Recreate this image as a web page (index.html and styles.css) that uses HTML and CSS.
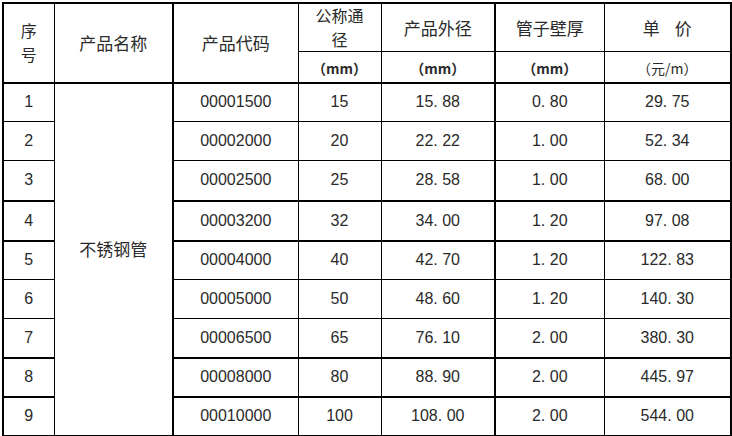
FILE: index.html
```html
<!DOCTYPE html>
<html lang="zh">
<head>
<meta charset="utf-8">
<link rel="stylesheet" href="styles.css">
</head>
<body>
<table class="price">
  <colgroup>
    <col class="c-no"><col class="c-name"><col class="c-code"><col class="c-dn"><col class="c-od"><col class="c-wall"><col class="c-price">
  </colgroup>
  <thead>
    <tr class="h1">
      <th rowspan="2" class="tight">序<br>号</th>
      <th rowspan="2" class="thickr">产品名称</th>
      <th rowspan="2">产品代码</th>
      <th class="tight">公称通<br>径</th>
      <th class="thickr">产品外径</th>
      <th>管子壁厚</th>
      <th>单&nbsp;&nbsp;&nbsp;&nbsp;价</th>
    </tr>
    <tr class="h2">
      <th class="unit">（mm）</th>
      <th class="unit thickr">（mm）</th>
      <th class="unit">（mm）</th>
      <th class="unit2">（元/m）</th>
    </tr>
  </thead>
  <tbody>
    <tr class="r39"><td>1</td><td rowspan="9" class="name thickr">不锈钢管</td><td>00001500</td><td>15</td><td class="thickr">15. 88</td><td>0. 80</td><td>29. 75</td></tr>
    <tr class="r39"><td>2</td><td>00002000</td><td>20</td><td class="thickr">22. 22</td><td>1. 00</td><td>52. 34</td></tr>
    <tr class="r40 thickb"><td>3</td><td>00002500</td><td>25</td><td class="thickr">28. 58</td><td>1. 00</td><td>68. 00</td></tr>
    <tr class="r40 thickb"><td>4</td><td>00003200</td><td>32</td><td class="thickr">34. 00</td><td>1. 20</td><td>97. 08</td></tr>
    <tr class="r39"><td>5</td><td>00004000</td><td>40</td><td class="thickr">42. 70</td><td>1. 20</td><td>122. 83</td></tr>
    <tr class="r39"><td>6</td><td>00005000</td><td>50</td><td class="thickr">48. 60</td><td>1. 20</td><td>140. 30</td></tr>
    <tr class="r39 thickb"><td>7</td><td>00006500</td><td>65</td><td class="thickr">76. 10</td><td>2. 00</td><td>380. 30</td></tr>
    <tr class="r39 thickb"><td>8</td><td>00008000</td><td>80</td><td class="thickr">88. 90</td><td>2. 00</td><td>445. 97</td></tr>
    <tr class="r39"><td>9</td><td>00010000</td><td>100</td><td class="thickr">108. 00</td><td>2. 00</td><td>544. 00</td></tr>
  </tbody>
</table>
</body>
</html>
```

FILE: styles.css
```css
html, body {
  margin: 0;
  padding: 0;
  background: #ffffff;
}

body {
  padding: 2px 1px 1px 2px;
}

.price {
  border-collapse: collapse;
  table-layout: fixed;
  width: 729px;
  border: 2px solid #000;
  font-family: "Liberation Sans", "Noto Sans CJK SC", sans-serif;
  color: #2a2a2a;
}

.c-no { width: 51px; }
.c-name { width: 119px; }
.c-code { width: 125px; }
.c-dn { width: 83px; }
.c-od { width: 114px; }
.c-wall { width: 109px; }
.c-price { width: 127px; }

.price th,
.price td {
  border: 1px solid #000;
  padding: 0;
  text-align: center;
  vertical-align: middle;
  overflow: hidden;
  white-space: nowrap;
}

.price th {
  font-weight: normal;
  font-size: 17px;
  font-family: "Noto Sans CJK SC", sans-serif;
  line-height: 22px;
}

.price th.tight {
  line-height: 23.5px;
  font-size: 16px;
}

.price td {
  font-size: 16px;
}

.h1 { height: 48px; }
.h2 { height: 31px; }
.h2 th { border-bottom: 2px solid #000; }

.price th.unit {
  font-size: 14px;
  font-weight: bold;
  line-height: 18px;
  padding-top: 2px;
}

.price th.unit2 {
  font-size: 14px;
  line-height: 18px;
  padding-top: 2px;
}

.price thead tr.h1 th[rowspan] {
  border-bottom: 2px solid #000;
}

.r39 { height: 39px; }
.r40 { height: 40px; }

.thickb td { border-bottom: 2px solid #000; }
.price .thickr { border-right: 2px solid #000; }

.price td.name {
  font-family: "Noto Sans CJK SC", sans-serif;
  font-size: 17px;
  padding-bottom: 22px;
  border-bottom: 2px solid #000;
}
```
